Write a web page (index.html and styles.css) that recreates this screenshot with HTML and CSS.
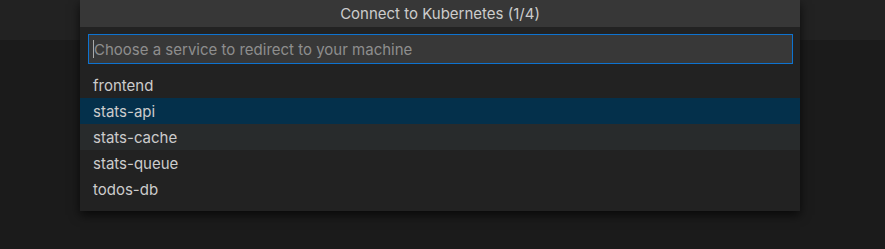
FILE: index.html
```html
<!DOCTYPE html>
<html lang="en">
<head>
    <meta charset="UTF-8">
    <meta name="viewport" content="width=device-width, initial-scale=1.0">
    <title>Connect to Kubernetes</title>
    <link rel="stylesheet" href="styles.css">
</head>
<body>
    <div class="titlebar-strip"></div>
    <div class="quick-input">
        <div class="quick-title">Connect to Kubernetes (1/4)</div>
        <div class="quick-box">
            <div class="quick-field"><span class="caret"></span><span class="placeholder">Choose a service to redirect to your machine</span></div>
        </div>
        <ul class="quick-list">
            <li class="quick-item">frontend</li>
            <li class="quick-item selected">stats-api</li>
            <li class="quick-item hover">stats-cache</li>
            <li class="quick-item">stats-queue</li>
            <li class="quick-item">todos-db</li>
        </ul>
    </div>
</body>
</html>
```

FILE: styles.css
```css
body {
    margin: 0;
    height: 100vh;
    background-color: #1b1b1b;
    font-family: 'Inter', 'Noto Sans', sans-serif;
    font-size: 15px;
    color: #cccccc;
    overflow: hidden;
}
.titlebar-strip {
    height: 40px;
    background-color: #222222;
}
.quick-input {
    position: absolute;
    top: 0;
    left: 80px;
    width: 720px;
    background-color: #222222;
    box-shadow: 0 4px 10px rgba(0, 0, 0, 0.7);
    padding-bottom: 9px;
}
.quick-title {
    height: 27px;
    line-height: 27px;
    text-align: center;
    background-color: #373737;
    color: #cccccc;
}
.quick-box {
    padding: 7px 7px 0 8px;
}
.quick-field {
    height: 28px;
    border: 1px solid #0e73d0;
    background-color: #383838;
    display: flex;
    align-items: center;
    padding-left: 4px;
}
.caret {
    width: 1px;
    height: 18px;
    background-color: #aaaaaa;
}
.placeholder {
    color: #8e8e8e;
}
.quick-list {
    list-style: none;
    margin: 8px 0 0;
    padding: 0;
}
.quick-item {
    height: 26px;
    line-height: 28px;
    padding-left: 13px;
}
.quick-item.selected {
    background-color: #04304b;
}
.quick-item.hover {
    background-color: #282b2c;
}
```
